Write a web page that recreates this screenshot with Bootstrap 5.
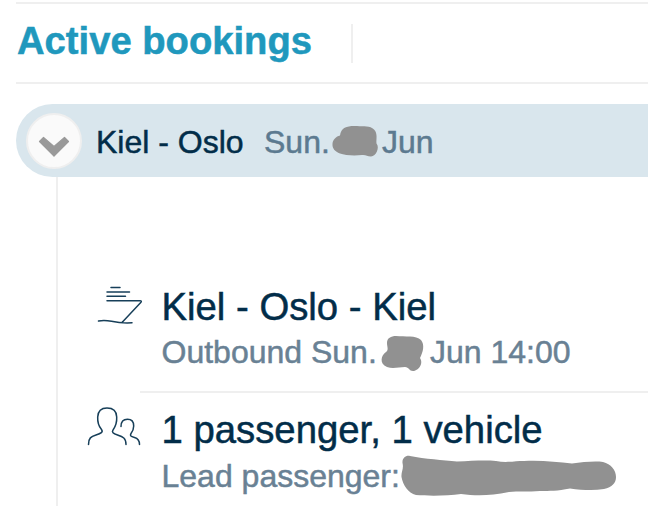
<!DOCTYPE html>
<html lang="en">
<head>
<meta charset="utf-8">
<meta name="viewport" content="width=device-width, initial-scale=1">
<title>Active bookings</title>
<link href="https://cdn.jsdelivr.net/npm/bootstrap@5.3.0/dist/css/bootstrap.min.css" rel="stylesheet">
<style>
body{font-family:"Liberation Sans",Arial,sans-serif;color:#022d49;background:#fff;height:506px;overflow:hidden;-webkit-text-stroke:.5px currentColor}
svg{display:block;flex:none;overflow:visible}
.page{padding:2px 0 0 16px}
.head{height:82px;border-top:2px solid #efefef;border-bottom:2px solid #efefef;padding-bottom:3px}
.head h1{font-size:38.2px;font-weight:700;color:#2098bd;line-height:1;width:335px;margin:0;padding-left:1px;white-space:nowrap}
.rule{width:2px;height:39px;background:#efefef;margin-top:4px}
.bar{height:73px;margin-top:20px;border-radius:36.5px 0 0 36.5px;background:#d9e6ed;padding-left:10px;font-size:32px;white-space:nowrap}
.toggle{width:56px;height:56px;border:2px solid #efefef;background:#fafafa;padding:0;flex:none}
.route{margin-left:14px;width:168px;padding-top:3px}
.when{color:#5c7a90;padding-top:3px}
.details{margin-left:40px;border-left:2px solid #efefef;height:329px;padding-top:107px}
.entry{padding-left:30px}
.pic{width:73.5px;flex:none}
.body-text{white-space:nowrap;line-height:44px;font-size:32px;color:#698194}
.body-text h2{font-size:38.3px;line-height:46px;margin:0;font-weight:400;color:#022d49}
.lead-name{padding-top:1px}
.split{margin:17px 0 14px 82px;height:2px;background:#efefef}
</style>
</head>
<body>
<main class="page">
  <header class="head d-flex align-items-center">
    <h1>Active bookings</h1><div class="rule"></div>
  </header>
  <section>
    <div class="bar d-flex align-items-center">
      <button class="toggle rounded-circle d-flex" type="button" aria-label="Collapse">
        <svg width="52" height="52" viewBox="28 114 52 52"><path d="M39.500 140.500l4-4L54 145.500l10.500-9 4 4L54 155.200z" fill="#999" stroke="#999" stroke-width="1.200" stroke-linejoin="round"/></svg>
      </button>
      <div class="route">Kiel - Oslo</div>
      <div class="when d-flex align-items-center"><span style="width:68px">Sun.</span>
        <svg width="50" height="34" viewBox="332 123 50 34"><path d="M340 134C341 125 349 124 357 124.500C364 125 370 124 374 128C378 132 376 138 376.500 142C380 146 376 155 371 155C367 155 366 153 362 153.500C355 154.500 345 154 340 152C335 150 332 147 332.500 142C333 138 336 135 340 134Z" fill="#919191" transform="translate(0 -.5)"/></svg>
        <span>Jun</span></div>
    </div>
    <div class="details">
      <div class="entry d-flex">
        <div class="pic">
          <svg width="60" height="50" viewBox="88 284 60 50" fill="none" stroke="#173f59" stroke-width="1.500" stroke-linecap="round" stroke-linejoin="round"><path d="M111 287.500h9M107 292h22.500M107 296.300h18.500M107 300.700h33q2 0 1 1.500L122 322.500M98.500 321c5-1 9-.5 13 .3 7 1.500 12 2 20.500 1.500"/></svg>
        </div>
        <div class="body-text"><h2>Kiel - Oslo - Kiel</h2>
          <div class="d-flex"><span style="width:219.5px">Outbound Sun.</span>
          <svg width="49" height="44" viewBox="381 330 49 44"><path d="M387 343C387 338 391 336 396 336C405 337 416 335 421 340C425 345 423 352 420 358C424 364 418 371 413 371C409 371 409 367 405 367C399 367 393 369 387 367C379 364 381 355 386 352C389 350 387 347 387 343Z" fill="#919191"/></svg>
          <span>Jun 14:00</span></div>
        </div>
      </div>
      <div class="split"></div>
      <div class="entry d-flex">
        <div class="pic">
          <svg width="60" height="50" viewBox="88 407 60 50" fill="none" stroke="#173f59" stroke-width="1.500" stroke-linecap="round" stroke-linejoin="round"><path d="M88.500 444.500C88.500 438 91 436.500 96 435C101 433.500 103.500 432 101.500 429.500C98.500 426 97.500 421 97.700 417C98 411 101 408 107 408C113 408 116.500 411 116.700 417C117 422 115.500 426.500 113 430C111.500 432 113 433.500 117.500 435C123 436.700 126 438 126 444.500"/><path d="M121 426.500C121 421.500 123.500 419.300 127.500 419.300C131.500 419.300 133.700 421.500 133.700 426C133.700 429 132.500 431.500 131 433.500C129.500 436 131 436.500 134.500 437.500C138 438.500 139.500 440 139.500 444.500"/></svg>
        </div>
        <div class="body-text"><h2>1 passenger, 1 vehicle</h2>
          <div class="lead-name d-flex"><span style="width:239.5px">Lead passenger:</span>
          <svg width="216" height="44" viewBox="401 454 216 44"><path d="M402.500 463C402 458 406 455 410 456C425 459 443 460 457 461.500C472 461 484 460 496 461C506 463 515 461 524 461C541 460 557 462 572 463.500C583 462 595 461 603 462C611 464 616 470 616 477C616 483 612 487 604 489C593 491 582 490 570 488.500C557 491 550 491 540 491C528 492 518 491 509 492C490 496 476 496 461 494C447 496 428 496 416 495C408 493 403 485 401.500 477C401 472 404 469 402.500 463Z" fill="#919191"/></svg></div>
        </div>
      </div>
    </div>
  </section>
</main>
<script src="https://cdn.jsdelivr.net/npm/bootstrap@5.3.0/dist/js/bootstrap.bundle.min.js"></script>
</body>
</html>
